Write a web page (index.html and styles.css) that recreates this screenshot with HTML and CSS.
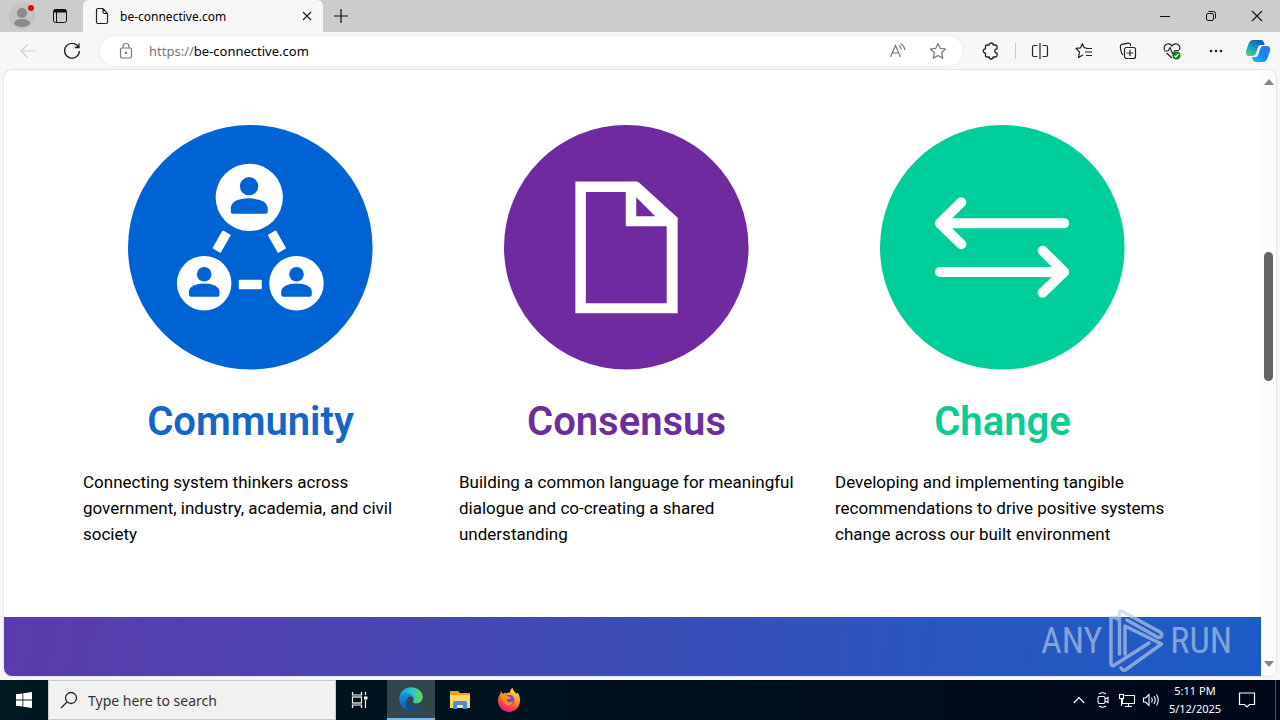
FILE: index.html
```html
<!DOCTYPE html>
<html lang="en">
<head>
<meta charset="utf-8">
<title>be-connective.com</title>
<link rel="stylesheet" href="styles.css">
</head>
<body>
<header class="tabstrip">
  <button class="profile" aria-label="Profile">
    <svg width="30" height="30" viewBox="0 0 30 30"><circle cx="15" cy="15" r="13" fill="#c3c3c3"/><circle cx="15" cy="12" r="5" fill="#8b8b8b"/><ellipse cx="15" cy="22" rx="8" ry="4" fill="#8b8b8b"/><circle cx="24" cy="7" r="3" fill="#d90b0b"/></svg>
  </button>
  <button class="workspaces" aria-label="Tab actions">
    <svg width="16" height="16" viewBox="0 0 16 16" fill="none" stroke="#111"><rect x="1.500" y="1.500" width="13" height="13" rx="2"/><path d="M2 3h12" stroke-width="3"/><path d="M4.500 4v10"/></svg>
  </button>
  <div class="tab">
    <svg width="14" height="18" viewBox="0 0 14 18" fill="none" stroke="#222" stroke-width="1.200"><path d="M3 1.500h5l4.500 5V15q0 1.500-1.500 1.500H3Q1.500 16.500 1.500 15V3Q1.500 1.500 3 1.500zM8 1.500V5q0 1.500 1.500 1.500h3"/></svg>
    <span class="tab-title">be-connective.com</span>
    <button class="tab-close" aria-label="Close tab"><svg width="10" height="10" viewBox="0 0 10 10" stroke="#222" stroke-width="1.200"><path d="M1 1l8 8M9 1L1 9"/></svg></button>
  </div>
  <button class="newtab" aria-label="New tab"><svg width="16" height="16" viewBox="0 0 16 16" stroke="#111" stroke-width="1.200"><path d="M1 8h14M8 1v14"/></svg></button>
  <div class="spacer"></div>
  <button class="winbtn" aria-label="Minimize"><svg width="12" height="12" viewBox="0 0 12 12" stroke="#111"><path d="M1 6.500h10"/></svg></button>
  <button class="winbtn" aria-label="Restore"><svg width="12" height="12" viewBox="0 0 12 12" fill="none" stroke="#111"><rect x="1.500" y="3.500" width="7" height="7" rx="1.500"/><path d="M3.500 1.500H8.500q2 0 2 2v5"/></svg></button>
  <button class="winbtn" aria-label="Close"><svg width="12" height="12" viewBox="0 0 12 12" stroke="#111" stroke-width="1.100"><path d="M1 1l10 10M11 1L1 11"/></svg></button>
</header>

<nav class="toolbar">
  <button class="tool" aria-label="Back"><svg width="18" height="16" viewBox="0 0 18 16" fill="none" stroke="#cfcfcf" stroke-width="1.200"><path d="M17 8H2M8.500 1.500L2 8l6.500 6.500"/></svg></button>
  <button class="tool" aria-label="Refresh"><svg width="18" height="18" viewBox="0 0 18 18" fill="none" stroke="#222" stroke-width="1.300"><path d="M15.500 5.200A7.400 7.400 0 1 0 16.400 9M16 1.500v4h-4.300"/></svg></button>
  <div class="address">
    <svg class="lock" width="14" height="18" viewBox="0 0 14 18" fill="none" stroke="#777" stroke-width="1.200"><rect x="1.500" y="6" width="11" height="10" rx="1.500"/><path d="M4 6V4.500a3 3 0 0 1 6 0V6"/><circle cx="7" cy="11" r=".6" fill="#777"/></svg>
    <a class="url" href="#"><span class="scheme">https://</span>be-connective.com</a>
    <button class="mini" aria-label="Read aloud"><svg width="18" height="18" viewBox="0 0 18 18" fill="none" stroke="#777" stroke-width="1.200"><path d="M1.500 15L6.500 3.500l5 11.500M3.300 11h6.500M10 3.500q2 1.200 2.300 4M11.500 1.500q4 2.500 4.200 6.500"/></svg></button>
    <button class="mini" aria-label="Add to favorites"><svg width="18" height="18" viewBox="0 0 18 18" fill="none" stroke="#777" stroke-width="1.200" stroke-linejoin="round"><path d="M9 1.500l2.300 4.900 5.200.6-3.900 3.700 1.100 5.400L9 13.500l-4.700 2.600 1.100-5.400L1.500 7l5.200-.6z"/></svg></button>
  </div>
  <button class="tool first" aria-label="Extensions"><svg width="18" height="18" viewBox="0 0 18 18" fill="none" stroke="#222" stroke-width="1.300" stroke-linejoin="round"><path d="M5 3h2.200a2 2 0 0 1 4 0H13.500q1.500 0 1.500 1.500V7c-3-.5-3 4.500 0 4v2.500q0 1.500-1.500 1.500h-2.300a2 2 0 0 1-4 0H5q-1.500 0-1.500-1.500v-2.300a2.200 2.200 0 1 1 0-4.400V4.500Q3.500 3 5 3z"/></svg></button>
  <span class="divider"></span>
  <button class="tool" aria-label="Split screen"><svg width="18" height="18" viewBox="0 0 18 18" fill="none" stroke="#222" stroke-width="1.200"><path d="M6.500 3.500H3Q1.500 3.500 1.500 5v8q0 1.500 1.500 1.500h3.500M11.500 3.500H15q1.500 0 1.500 1.500v8q0 1.500-1.500 1.500h-3.500M9 1v16"/></svg></button>
  <button class="tool" aria-label="Favorites"><svg width="18" height="18" viewBox="0 0 18 18" fill="none" stroke="#222" stroke-width="1.200" stroke-linejoin="round"><path d="M11.500 5.800L9 5.600 7.300 1.700 5.500 5.800l-4.500.6L4.500 10l-1 5.500 4.500-2.600M11 6.500h6M10 10h7M11 13.500h6"/></svg></button>
  <button class="tool" aria-label="Collections"><svg width="18" height="18" viewBox="0 0 18 18" fill="none" stroke="#222" stroke-width="1.200"><path d="M4 13Q2.500 12 2 9L1.300 5Q1.100 3 3 2.400L9 1.200q2-.3 2.500 1.500l.3 1.300"/><rect x="5.500" y="5.500" width="11" height="11" rx="2"/><path d="M11 7.800v6.400M7.800 11h6.400"/></svg></button>
  <button class="tool" aria-label="Browser essentials"><svg width="18" height="18" viewBox="0 0 18 18" fill="none" stroke="#222" stroke-width="1.200"><path d="M1.500 8Q0 3 4.500 2 7.500 1.500 9 4q1.500-2.500 4.500-2 4.500 1 3 6M1 9h4l2-3.500 3 7L12 8.500h4M3.500 11L9 16"/><circle cx="13.500" cy="13.500" r="4" fill="#138013" stroke="none"/><path d="M11.500 13.700l1.400 1.300 2.600-3" stroke="#fff"/></svg></button>
  <button class="tool" aria-label="Settings and more"><svg width="16" height="4" viewBox="0 0 16 4" fill="#222"><circle cx="3" cy="2" r="1.300"/><circle cx="8" cy="2" r="1.300"/><circle cx="13" cy="2" r="1.300"/></svg></button>
  <button class="tool copilot" aria-label="Copilot">
    <svg width="26" height="24" viewBox="0 0 26 24"><defs><linearGradient id="cpa" x1="0" y1="1" x2=".6" y2="0"><stop offset="0" stop-color="#6dd65b"/><stop offset=".45" stop-color="#20a9bb"/><stop offset="1" stop-color="#0a62c4"/></linearGradient><linearGradient id="cpb" x1="0" y1="1" x2="1" y2="0"><stop offset="0" stop-color="#15c0ff"/><stop offset=".5" stop-color="#1684f5"/><stop offset="1" stop-color="#3579ee"/></linearGradient></defs><path d="M8 1h8q2 0 2.700 2l1 3h-4q-2 0-2.600 2l-2 6q-1 3-3 3H4q-4 0-3-5L3.500 5Q5 1 8 1z" fill="url(#cpa)"/><path d="M18 7h4q4 0 3 5l-2.500 7q-1.500 4-4.500 4h-7q-2.500 0-3-2l-1-3h3.500q2 0 2.600-2l2-6q1-3 2.900-3z" fill="url(#cpb)"/></svg>
  </button>
</nav>

<div class="frame">
  <main class="page">
    <section class="pillars">
      <article class="pillar community">
        <svg class="badge" viewBox="0 0 245 245"><circle cx="122.500" cy="122.500" r="122.500" fill="#0063d3"/>
          <g fill="#fff"><circle cx="121.500" cy="72.500" r="33.700"/><circle cx="76.300" cy="158.500" r="27.300"/><circle cx="168.800" cy="158.500" r="27.300"/><rect x="111" y="155" width="23" height="9.500" rx="1"/><rect x="89" y="106.500" width="9.500" height="21" rx="1" transform="rotate(30 94 117)"/><rect x="144.500" y="106.500" width="9.500" height="21" rx="1" transform="rotate(-30 149 117)"/></g>
          <g fill="#0063d3"><circle cx="121.300" cy="61.300" r="9.200"/><path d="M103 87v-4q1-9 18.300-9.500Q139 74 140 83v4q0 2-2 2h-33q-2 0-2-2z"/><circle cx="76.300" cy="149.500" r="7.300"/><path d="M61 170v-4q2-7 15.300-7.300Q90 159 91.600 166v4q0 2-2 2H63q-2 0-2-2z"/><circle cx="168.800" cy="149.500" r="7.300"/><path d="M153.500 170v-4q2-7 15.300-7.300 13.700.3 15.300 7.300v4q0 2-2 2h-26.600q-2 0-2-2z"/></g></svg>
        <h2>Community</h2>
        <p>Connecting system thinkers across government, industry, academia, and civil society</p>
      </article>
      <article class="pillar consensus">
        <svg class="badge" viewBox="0 0 245 245"><circle cx="122.500" cy="122.500" r="122.500" fill="#702a9f"/><path fill="#fff" fill-rule="evenodd" d="M71.500 56.500H132q2 0 3.500 1.300L174 93v95.500H71.500zM82 67v111.500h81V101.500h-41V67zM132.500 72.500v19h19z"/></svg>
        <h2>Consensus</h2>
        <p>Building a common language for meaningful dialogue and co-creating a shared understanding</p>
      </article>
      <article class="pillar change">
        <svg class="badge" viewBox="0 0 245 245"><circle cx="122.500" cy="122.500" r="122.500" fill="#00ce9a"/><path d="M184.500 98.500H60M81.500 77.300L60 98.500l21.500 21M60 147.300h124.500M163 126l21.500 21.300L163 168" fill="none" stroke="#fff" stroke-width="10" stroke-linecap="round" stroke-linejoin="round"/></svg>
        <h2>Change</h2>
        <p>Developing and implementing tangible recommendations to drive positive systems change across our built environment</p>
      </article>
    </section>
    <section class="band"></section>
  </main>
  <div class="scrollbar">
    <svg width="10" height="6" viewBox="0 0 10 6"><path d="M0 6L5 0l5 6z" fill="#858585"/></svg>
    <div class="track"><div class="thumb"></div></div>
    <svg width="10" height="6" viewBox="0 0 10 6"><path d="M0 0l5 6 5-6z" fill="#858585"/></svg>
  </div>
  <div class="watermark">
    <span>ANY</span>
    <svg width="58" height="66" viewBox="0 0 58 66" fill="none" stroke="currentColor" stroke-width="3.500" stroke-linejoin="round" stroke-linecap="round"><path d="M10 11V9.500H4V55q0 4 3.500 2L42 35M12.500 46V5q0-3 3-1.500L53 24q3 2 1 5l-3 .5L20 12M18 46V18L54.500 36 19 61.500q-3 2-5-1.500"/></svg>
    <span>RUN</span>
  </div>
</div>

<footer class="taskbar">
  <button class="task" aria-label="Start"><svg width="16" height="16" viewBox="0 0 16 16" fill="#fff"><path d="M0 2.300L6.500 1.400v6.200H0zM7.300 1.200L16 0v7.600H7.300zM0 8.400h6.500v6.200L0 13.700zM7.300 8.400H16V16l-8.700-1.200z"/></svg></button>
  <label class="search">
    <svg width="18" height="18" viewBox="0 0 18 18" fill="none" stroke="#222" stroke-width="1.300"><circle cx="11" cy="7" r="5.500"/><path d="M7 11l-6 6"/></svg>
    <input type="text" placeholder="Type here to search" aria-label="Type here to search">
  </label>
  <button class="task" aria-label="Task view"><svg width="18" height="18" viewBox="0 0 18 18" fill="none" stroke="#fff" stroke-width="1.200"><path d="M1.500 1v3h9V1M1.500 17v-3h9v3"/><rect x="1.500" y="6" width="9" height="6"/><path d="M14.500 1v3M14.500 9v8"/><path d="M13 7h3.500" stroke-width="3"/></svg></button>
  <div class="apps">
    <button class="task active" aria-label="Microsoft Edge"><svg width="24" height="24" viewBox="0 0 24 24"><defs><linearGradient id="ea" x1="0" y1=".4" x2="1" y2=".4"><stop offset="0" stop-color="#1a9fe0"/><stop offset=".55" stop-color="#2fc3c7"/><stop offset="1" stop-color="#66d84c"/></linearGradient><linearGradient id="eb" x1="0" y1="0" x2="0" y2="1"><stop offset="0" stop-color="#1b93dd"/><stop offset="1" stop-color="#0c59a4"/></linearGradient></defs><path d="M.5 11C1 4.500 6 .3 12 .3 19 .3 23.700 5 23.700 10c0 4-3 6.300-6.300 6.300-2.400 0-4-.8-3.400-1.800 1.800-3 0-6-4-6.300C5.500 8 1.500 9 .5 11z" fill="url(#ea)"/><path d="M.3 12.500C.3 8 3.500 5.700 7 5.700c4 0 7 2.800 7.400 5.500-1-2-4.500-2.500-5.800.3-1.900 4 1.200 9 6.400 9 2.700 0 4.500-.6 6.500-2C19 22.300 16 23.700 12 23.700 5.500 23.700.3 18.700.3 12.500z" fill="url(#eb)"/><path d="M8.600 11.500c-1.900 4 1.200 9 6.400 9 2.700 0 4.500-.6 6.500-2-2.500 3.800-5.500 5.200-9.500 5.200-6-1-7-9-3.400-12.200z" fill="#0b4e98"/></svg></button>
    <button class="task" aria-label="File Explorer"><svg width="22" height="20" viewBox="0 0 22 20"><path d="M1 2q0-1 1-1h7l2 2h9q1 0 1 1v14H1z" fill="#e9a21d"/><path d="M1 5h20v13H1z" fill="#ffd667"/><path d="M4 19v-6q0-2 2-2h10q2 0 2 2v6h-4v-4H8v4z" fill="#3e93d6"/><path d="M8 15h6v3H8z" fill="#ffe28d"/></svg></button>
    <button class="task" aria-label="Firefox"><svg width="24" height="24" viewBox="0 0 24 24"><defs><linearGradient id="ff" x1=".8" y1="0" x2=".3" y2="1"><stop offset="0" stop-color="#fff04a"/><stop offset=".4" stop-color="#ff9a20"/><stop offset=".75" stop-color="#ff3b4c"/><stop offset="1" stop-color="#e31587"/></linearGradient></defs><path d="M3.800 3l2 3 2-1.500L9 5.500c1.500-1 3-1 4-.8C13 2.500 14 1 15.500 0c.5 3 3 4 4.200 6l1-1.500C22.500 7 23 10 23 12.500 23 19 18 24 12 24S1 19 1 12.800C1 9 2.500 7 3.500 5.500z" fill="url(#ff)"/><circle cx="12" cy="12" r="5.300" fill="#7548dc"/><path d="M4.500 8Q8 6 11 8.500l3 .5q-.5 2-3.500 2-1.500 1.500.5 3 3 1 5-1-1 4.500-5 4.500-5.500-.5-6.500-9.500z" fill="#ff8b20"/></svg></button>
  </div>
  <div class="spacer"></div>
  <button class="tray" aria-label="Show hidden icons"><svg width="12" height="8" viewBox="0 0 12 8" fill="none" stroke="#fff" stroke-width="1.200"><path d="M.8 7L6 1.500 11.200 7"/></svg></button>
  <button class="tray" aria-label="Meet now"><svg width="14" height="18" viewBox="0 0 14 18" fill="none" stroke="#fff" stroke-width="1.100"><rect x="2" y="5.500" width="7" height="7" rx="1.500"/><path d="M9 8l3-1.500v5L9 10M3 3q3.500-2.500 7 0M3 15q3.500 2.500 7 0"/></svg></button>
  <button class="tray" aria-label="Network"><svg width="18" height="16" viewBox="0 0 18 16" fill="none" stroke="#fff" stroke-width="1.100"><path d="M6.500 3.500h10v8h-12V7M10.500 11.500v3M7 14.500h7M3.500 7v7"/><rect x="1.500" y="2.500" width="4" height="4"/></svg></button>
  <button class="tray" aria-label="Volume"><svg width="18" height="16" viewBox="0 0 18 16" fill="none" stroke="#fff" stroke-width="1.100"><path d="M1.500 6h2L7 2.500v11L3.500 10h-2zM9.500 5.500q1.500 2.500 0 5M12 4q2.500 4 0 8M14.500 2.500q3.500 5.500 0 11"/></svg></button>
  <div class="clock"><time>5:11 PM</time><time>5/12/2025</time></div>
  <button class="notify" aria-label="Notifications"><svg width="18" height="18" viewBox="0 0 18 18" fill="none" stroke="#fff" stroke-width="1.200"><path d="M1.500 2h15v11.500h-5L9 16l-2.500-2.500h-5z"/></svg></button>
  <button class="desktop" aria-label="Show desktop"></button>
</footer>
</body>
</html>
```

FILE: styles.css
```css
* { box-sizing: border-box; }

body {
  margin: 0;
  height: 100vh;
  display: flex;
  flex-direction: column;
  overflow: hidden;
  background: #f7f7f7;
  font-family: "Noto Sans", "Open Sans", sans-serif;
  color: #000;
}

button {
  display: flex;
  align-items: center;
  justify-content: center;
  flex: none;
  padding: 0;
  border: 0;
  background: none;
}

svg { display: block; flex: none; }
.spacer { flex: 1; }

/* Tab strip */
.tabstrip { display: flex; height: 32px; background: #ccc; }
.profile { width: 44px; }
.workspaces { width: 32px; margin-right: 7px; }
.tab {
  display: flex;
  align-items: center;
  gap: 11px;
  width: 240px;
  padding: 0 11px 0 12px;
  border-radius: 6px 6px 0 0;
  background: #f7f7f7;
}
.tab-title { flex: 1; font-size: 12px; }
.tab-close { width: 10px; height: 20px; }
.newtab { width: 36px; }
.winbtn { width: 46px; }

/* Toolbar */
.toolbar { display: flex; align-items: center; height: 38px; padding: 0 2px 0 6px; }
.tool { width: 44px; height: 32px; }
.address {
  display: flex;
  align-items: center;
  flex: 1;
  height: 30px;
  margin-left: 6px;
  padding: 0 5px 0 19px;
  border-radius: 15px;
  background: #fff;
  box-shadow: 0 0 2px #ddd;
}
.url { flex: 1; margin-left: 16px; color: #000; font-size: 13px; text-decoration: none; }
.scheme { color: #757575; }
.mini { width: 40px; height: 30px; }
.first { margin-left: 6px; }
.divider { width: 1px; height: 16px; margin: 0 2px; background: #ccc; }
.copilot { width: 40px; }

/* Web page viewport */
.frame {
  position: relative;
  display: flex;
  flex: 1;
  min-height: 0;
  margin: 0 4px 4px;
  border-radius: 8px;
  overflow: hidden;
  background: #fff;
  box-shadow: 0 0 2px #bbb;
}
.page { display: flex; flex: 1; flex-direction: column; }
.pillars {
  display: grid;
  grid-template-columns: repeat(3, 1fr);
  column-gap: 41px;
  padding: 55px 91px 70px 79px;
  font-family: Roboto, sans-serif;
}
.pillar { display: flex; flex-direction: column; align-items: center; }
.badge { width: 73%; }
.pillar h2 { margin: 28px 0 23px; font-size: 40px; font-weight: 600; line-height: 48px; }
.pillar p { align-self: stretch; margin: 0; font-size: 17px; line-height: 26px; }
.community h2 { color: #1565c8; }
.consensus h2 { color: #6b2f9b; }
.change h2 { color: #0cca93; }
.band { flex: 1; background: linear-gradient(100deg, #5b3bab 0%, #3f4ab4 45%, #2a56bf 75%, #1c5cc6 100%); }

.scrollbar {
  display: flex;
  flex-direction: column;
  align-items: center;
  width: 15px;
  padding: 9px 0;
  background: #fcfcfc;
}
.track { flex: 1; padding-top: 167px; }
.thumb { width: 9px; height: 129px; border-radius: 5px; background: #636363; }

.watermark {
  position: absolute;
  right: 44px;
  bottom: 2px;
  display: flex;
  align-items: center;
  gap: 5px;
  color: rgba(190, 205, 232, 0.65);
  font-family: "Roboto Condensed", "Open Sans Condensed", "Liberation Sans Narrow", Roboto, sans-serif;
  font-size: 36px;
  font-weight: 400;
}

/* Taskbar */
.taskbar { display: flex; height: 40px; background: linear-gradient(90deg, #001820, #000f1c 60%, #000719); }
.task { width: 48px; }
.search {
  display: flex;
  align-items: center;
  gap: 10px;
  width: 288px;
  padding: 0 11px;
  border: 1px solid #c8c8c8;
  background: #f1f1f1;
}
.search input {
  flex: 1;
  min-width: 0;
  padding: 0;
  border: 0;
  outline: 0;
  background: none;
  font: 14px "Noto Sans", sans-serif;
}
.search input::placeholder { color: #333; opacity: 1; }
.apps { display: flex; gap: 1px; margin-left: 3px; }
.active { border-bottom: 2px solid #76b9ed; background: #33464d; }
.tray { width: 24px; }
.clock {
  display: flex;
  flex-direction: column;
  align-items: center;
  justify-content: center;
  width: 64px;
  color: #fff;
  font-size: 11px;
  line-height: 18px;
}
.notify { width: 40px; margin-right: 8px; }
.desktop { width: 5px; border-left: 1px solid #4a5260; }
```
